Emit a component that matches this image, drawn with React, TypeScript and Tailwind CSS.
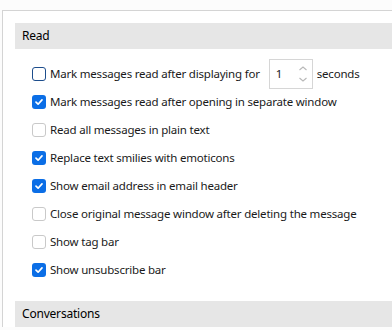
import React from "react";

const Check = ({ checked, focus }: { checked?: boolean; focus?: boolean }) =>
  checked ? (
    <div className="w-[14px] h-[14px] rounded-[3px] bg-[#0b6ee6] flex items-center justify-center shrink-0">
      <svg width="10" height="10" viewBox="0 0 10 10">
        <path d="M2 5.2 L4.1 7.2 L8 2.9" fill="none" stroke="white" strokeWidth="1.7" strokeLinecap="round" strokeLinejoin="round" />
      </svg>
    </div>
  ) : (
    <div
      className={
        "w-[14px] h-[14px] rounded-[3px] bg-white shrink-0 border " +
        (focus ? "border-[#1d4d8c] border-[1.5px]" : "border-[#c9c9c9]")
      }
    />
  );

const Row = ({ checked, focus, children }: { checked?: boolean; focus?: boolean; children: React.ReactNode }) => (
  <div className="h-[28px] flex items-center gap-[4px] pl-[17px]">
    <Check checked={checked} focus={focus} />
    <div className="flex items-center">{children}</div>
  </div>
);

export default function App() {
  return (
    <div
      className="w-[392px] h-[330px] bg-[#fcfcfc] overflow-hidden text-[11.5px] tracking-[-0.2px] text-[#1a1a1a]"
      style={{ fontFamily: '"Noto Sans", "Open Sans", sans-serif' }}
    >
      <div className="ml-[2px] mt-[10px] w-[420px] border-l border-t border-[#d4d4d4] pl-[12px] pt-[12px] bg-white">
        <div className="h-[26px] bg-[#e6e6e6] flex items-center pl-[7px] text-[12px] text-black">Read</div>
        <div className="mt-[11px]">
          <Row focus>
            <span>Mark messages read after displaying for</span>
            <div className="ml-[9px] w-[44px] h-[30px] border border-[#d6d6d6] bg-white flex items-center justify-between pl-[6px] pr-[4px]">
              <span>1</span>
              <svg width="10" height="20" viewBox="0 0 10 20">
                <path d="M1.5 6 L5 3 L8.5 6" fill="none" stroke="#b8b8b8" strokeWidth="1.1" />
                <path d="M1.5 14 L5 17 L8.5 14" fill="none" stroke="#b8b8b8" strokeWidth="1.1" />
              </svg>
            </div>
            <span className="ml-[4px]">seconds</span>
          </Row>
          <Row checked>Mark messages read after opening in separate window</Row>
          <Row>Read all messages in plain text</Row>
          <Row checked>Replace text smilies with emoticons</Row>
          <Row checked>Show email address in email header</Row>
          <Row>Close original message window after deleting the message</Row>
          <Row>Show tag bar</Row>
          <Row checked>Show unsubscribe bar</Row>
        </div>
        <div className="mt-[17px] h-[26px] bg-[#e6e6e6] flex items-center pl-[7px] text-[12px] text-black">Conversations</div>
      </div>
    </div>
  );
}
